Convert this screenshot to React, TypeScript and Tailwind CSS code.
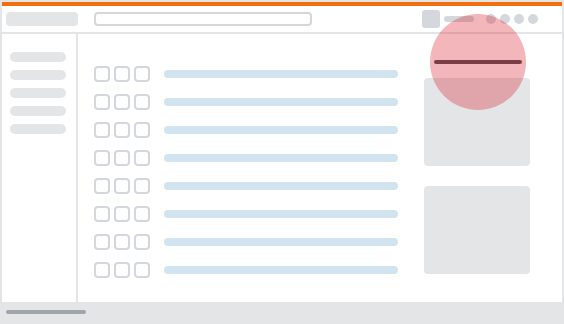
export default function App() {
  const rows = Array.from({ length: 8 });
  const sideItems = Array.from({ length: 5 });

  return (
    <div className="relative w-[564px] h-[324px] bg-[#e4e5e7] flex flex-col overflow-hidden">
      <div className="mx-[2px] mt-[2px] flex-1 flex flex-col bg-white">
        <div className="h-[4px] bg-[#f26f0f]" />

        {/* header */}
        <div className="h-[28px] flex items-center border-b-2 border-[#e4e5e7] pl-[4px] pr-[24px]">
          <div className="w-[72px] h-[14px] rounded-[4px] bg-[#e4e5e7]" />
          <div className="ml-[16px] w-[218px] h-[14px] rounded-[4px] border-2 border-[#d4d7db]" />
          <div className="ml-auto flex items-center">
            <div className="w-[18px] h-[18px] rounded-[3px] bg-[#d4d7db]" />
            <div className="ml-[4px] w-[30px] h-[6px] rounded-full bg-[#d4d7db]" />
            <div className="ml-[12px] flex gap-[4px]">
              <div className="w-[10px] h-[10px] rounded-full bg-[#d4d7db]" />
              <div className="w-[10px] h-[10px] rounded-full bg-[#d4d7db]" />
              <div className="w-[10px] h-[10px] rounded-full bg-[#d4d7db]" />
              <div className="w-[10px] h-[10px] rounded-full bg-[#d4d7db]" />
            </div>
          </div>
        </div>

        {/* body */}
        <div className="flex-1 flex">
          <div className="w-[76px] border-r-2 border-[#e4e5e7] pl-[8px] pt-[18px] flex flex-col gap-[8px]">
            {sideItems.map((_, i) => (
              <div key={i} className="w-[56px] h-[10px] rounded-full bg-[#e4e5e7]" />
            ))}
          </div>

          <div className="flex-1 flex pl-[16px]">
            <div className="pt-[32px] flex flex-col gap-[12px]">
              {rows.map((_, i) => (
                <div key={i} className="h-[16px] flex items-center">
                  <div className="flex gap-[4px]">
                    <div className="w-[16px] h-[16px] rounded-[4px] border-2 border-[#d4d7db]" />
                    <div className="w-[16px] h-[16px] rounded-[4px] border-2 border-[#d4d7db]" />
                    <div className="w-[16px] h-[16px] rounded-[4px] border-2 border-[#d4d7db]" />
                  </div>
                  <div className="ml-[14px] w-[234px] h-[8px] rounded-full bg-[#d1e4f0]" />
                </div>
              ))}
            </div>

            <div className="ml-[26px] pt-[44px] flex flex-col gap-[20px]">
              <div className="w-[106px] h-[88px] rounded-[4px] bg-[#e4e5e7]" />
              <div className="w-[106px] h-[88px] rounded-[4px] bg-[#e4e5e7]" />
            </div>
          </div>
        </div>
      </div>

      {/* bottom bar */}
      <div className="h-[22px] pt-[8px] pl-[6px]">
        <div className="w-[80px] h-[4px] rounded-full bg-[#a0a5ab]" />
      </div>

      {/* highlight bubble */}
      <div className="absolute left-[430px] top-[14px] w-[96px] h-[96px] rounded-full bg-[rgba(218,46,61,0.35)]">
        <div className="absolute left-[4px] top-[46px] w-[88px] h-[4px] rounded-full bg-[#7a3e47]" />
      </div>
    </div>
  );
}
